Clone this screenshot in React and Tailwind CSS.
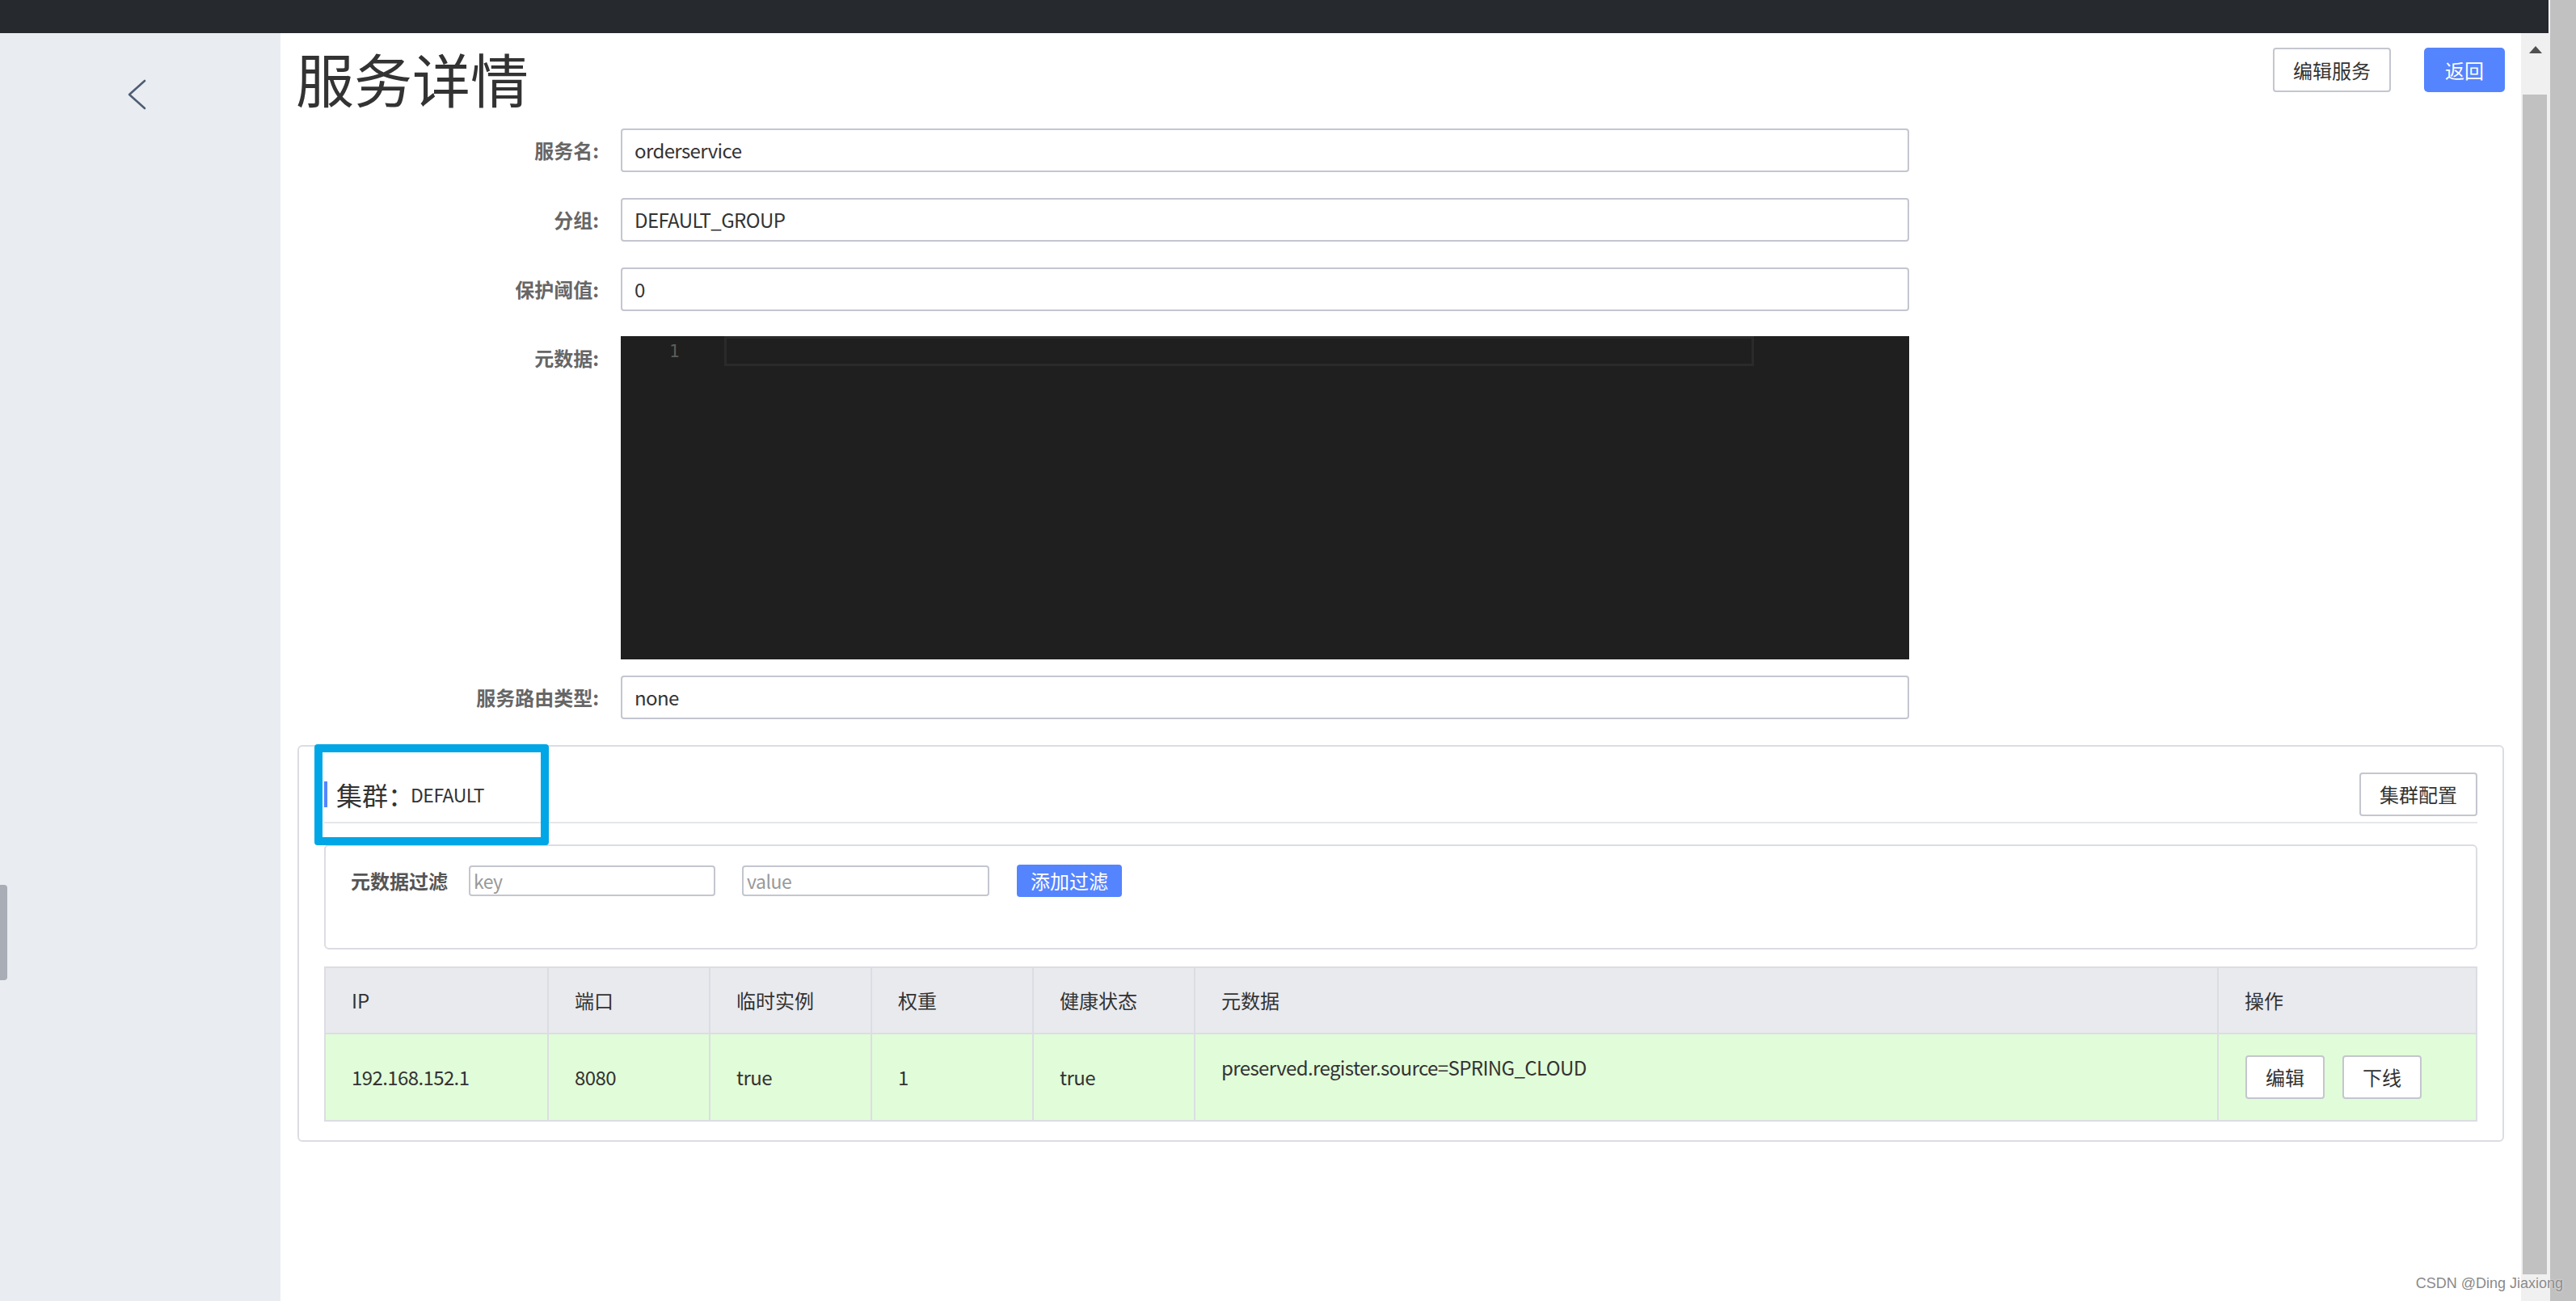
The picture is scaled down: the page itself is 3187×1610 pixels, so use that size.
import React from "react";

const Btn = ({ children, className = "" }) => (
  <div
    className={
      "flex items-center justify-center rounded-[4px] border-2 border-[#c4c6cf] bg-white text-[24px] text-[#333] " +
      className
    }
  >
    {children}
  </div>
);

const FormRow = ({ label, children, className = "" }) => (
  <div className={"flex items-start " + className}>
    <div className="h-[54px] w-[394px] shrink-0 text-right text-[24px] font-bold leading-[54px] text-[#666]">
      {label}
    </div>
    <div className="ml-[27px]">{children}</div>
  </div>
);

const Field = ({ value }) => (
  <div className="flex h-[54px] w-[1594px] items-center rounded-[4px] border-2 border-[#c4c6cf] bg-white px-[15px] text-[24px] tracking-[-0.6px] text-[#333]">
    {value}
  </div>
);

const cols = [
  { w: "w-[276px]", h: "IP", v: "192.168.152.1" },
  { w: "w-[200px]", h: "端口", v: "8080" },
  { w: "w-[200px]", h: "临时实例", v: "true" },
  { w: "w-[200px]", h: "权重", v: "1" },
  { w: "w-[200px]", h: "健康状态", v: "true" },
];

export default function App() {
  return (
    <div className="relative flex h-[1610px] w-[3187px] overflow-hidden bg-white font-['Noto_Sans_CJK_SC',sans-serif] text-[#333]">
      <div className="flex w-[3155px] flex-col">
        <div className="h-[41px] w-[3153px] bg-[#262a2f]" />
        <div className="flex min-h-0 flex-1">
          {/* sidebar */}
          <aside className="relative w-[347px] shrink-0 bg-[#e9ecf1] pl-[156px] pt-[57px]">
            <svg width="26" height="38" viewBox="0 0 26 38" fill="none">
              <polyline
                points="23,2 4,19 23,36"
                stroke="#4f5d73"
                strokeWidth="2.6"
                strokeLinecap="round"
                strokeLinejoin="round"
              />
            </svg>
            <div className="absolute left-0 top-[1054px] h-[118px] w-[9px] rounded-r-[4px] bg-[#a9adb5]" />
          </aside>

          {/* main */}
          <main className="flex-1 bg-white">
            <div className="flex items-start justify-between pl-[19px] pr-[20px] pt-[18px]">
              <h1 className="mt-[1px] text-[72px] font-normal leading-none text-[#333]">服务详情</h1>
              <div className="flex gap-[41px]">
                <Btn className="h-[55px] w-[146px]">编辑服务</Btn>
                <div className="flex h-[55px] w-[100px] items-center justify-center rounded-[5px] bg-[#5584ff] text-[24px] text-white">
                  返回
                </div>
              </div>
            </div>

            <div className="mt-[27px]">
              <FormRow label="服务名:">
                <Field value="orderservice" />
              </FormRow>
              <FormRow label="分组:" className="mt-[32px]">
                <Field value="DEFAULT_GROUP" />
              </FormRow>
              <FormRow label="保护阈值:" className="mt-[32px]">
                <Field value="0" />
              </FormRow>
              <FormRow label="元数据:" className="mt-[31px]">
                <div className="h-[400px] w-[1594px] bg-[#1f1f1f]">
                  <div className="flex h-[37px]">
                    <div className="w-[128px] shrink-0 pl-[60px] pt-[6px] text-left font-['DejaVu_Sans_Mono',monospace] text-[21px] leading-[26px] text-[#5c5c5c]">
                      1
                    </div>
                    <div className="h-[37px] w-[1274px] shrink-0 border-[3px] border-[#2a2a2a]" />
                  </div>
                </div>
              </FormRow>
              <FormRow label="服务路由类型:" className="mt-[20px]">
                <Field value="none" />
              </FormRow>
            </div>

            {/* cluster panel */}
            <div className="relative mx-[21px] mt-[32px] rounded-[6px] border-2 border-[#dcdde3] px-[31px] pb-[23px]">
              <div className="flex items-center justify-between border-b-2 border-[#e6e7eb] pb-[7px] pt-[32px]">
                <div className="flex items-center">
                  <div className="h-[32px] w-[4px] bg-[#5584ff]" />
                  <span className="ml-[11px] text-[32px] leading-none text-[#333]">集群：</span>
                  <span className="ml-[-4px] text-[23px] leading-none tracking-[-0.5px] text-[#333]">DEFAULT</span>
                </div>
                <Btn className="h-[54px] w-[146px]">集群配置</Btn>
              </div>

              <div className="mt-[26px] h-[130px] rounded-[6px] border-2 border-[#dcdde3] pl-[31px] pt-[23px]">
                <div className="flex items-center">
                  <span className="text-[24px] font-bold text-[#555]">元数据过滤</span>
                  <div className="ml-[26px] flex h-[38px] w-[305px] items-center rounded-[4px] border-2 border-[#c4c6cf] px-[4px] text-[23px] tracking-[-0.5px] text-[#999]">
                    key
                  </div>
                  <div className="ml-[33px] flex h-[38px] w-[306px] items-center rounded-[4px] border-2 border-[#c4c6cf] px-[4px] text-[23px] tracking-[-0.5px] text-[#999]">
                    value
                  </div>
                  <div className="ml-[34px] flex h-[40px] w-[130px] items-center justify-center rounded-[4px] bg-[#5584ff] text-[24px] text-white">
                    添加过滤
                  </div>
                </div>
              </div>

              {/* table */}
              <div className="mt-[21px] border-2 border-[#dcdde3]">
                <div className="flex h-[82px] border-b-2 border-[#dcdde3] bg-[#e9eaee]">
                  {cols.map((c) => (
                    <div key={c.h} className={c.w + " flex items-center border-r-2 border-[#dcdde3] pl-[32px] text-[24px] text-[#333]"}>
                      {c.h}
                    </div>
                  ))}
                  <div className="flex w-[1266px] items-center border-r-2 border-[#dcdde3] pl-[32px] text-[24px]">元数据</div>
                  <div className="flex w-[318px] items-center pl-[32px] text-[24px]">操作</div>
                </div>
                <div className="flex h-[106px] bg-[#e1fcd9]">
                  {cols.map((c) => (
                    <div key={c.h} className={c.w + " flex items-center border-r-2 border-[#dcdde3] pl-[32px] text-[24px] tracking-[-0.6px] text-[#333]"}>
                      {c.v}
                    </div>
                  ))}
                  <div className="w-[1266px] border-r-2 border-[#dcdde3] pl-[32px] pt-[23px] text-[24px] leading-[36px] tracking-[-0.6px]">
                    preserved.register.source=SPRING_CLOUD
                  </div>
                  <div className="flex w-[318px] items-center gap-[22px] pl-[33px]">
                    <Btn className="h-[54px] w-[98px]">编辑</Btn>
                    <Btn className="h-[54px] w-[98px]">下线</Btn>
                  </div>
                </div>
              </div>

              {/* annotation highlight */}
              <div className="pointer-events-none absolute left-[19px] top-[-3px] h-[125px] w-[290px] rounded-[4px] border-[10px] border-[#00a6e6]" />
            </div>
          </main>

          {/* inner scrollbar */}
          <div className="relative w-[36px] shrink-0 bg-[#f0f0f0]">
            <div className="flex h-[40px] items-center justify-center">
              <svg width="16" height="9" viewBox="0 0 16 9">
                <polygon points="8,0 16,9 0,9" fill="#505050" />
              </svg>
            </div>
            <div className="ml-[2px] mt-[36px] h-[1460px] w-[30px] bg-[#c1c1c1]" />
          </div>
        </div>
      </div>
      {/* outer scrollbar */}
      <div className="w-[32px] bg-[#c1c1c1]" />

      <div className="absolute bottom-[8px] right-[16px] font-['Liberation_Sans',sans-serif] text-[18px] text-[#8a8a8a] [text-shadow:0_0_2px_#fff]">
        CSDN @Ding Jiaxiong
      </div>
    </div>
  );
}
